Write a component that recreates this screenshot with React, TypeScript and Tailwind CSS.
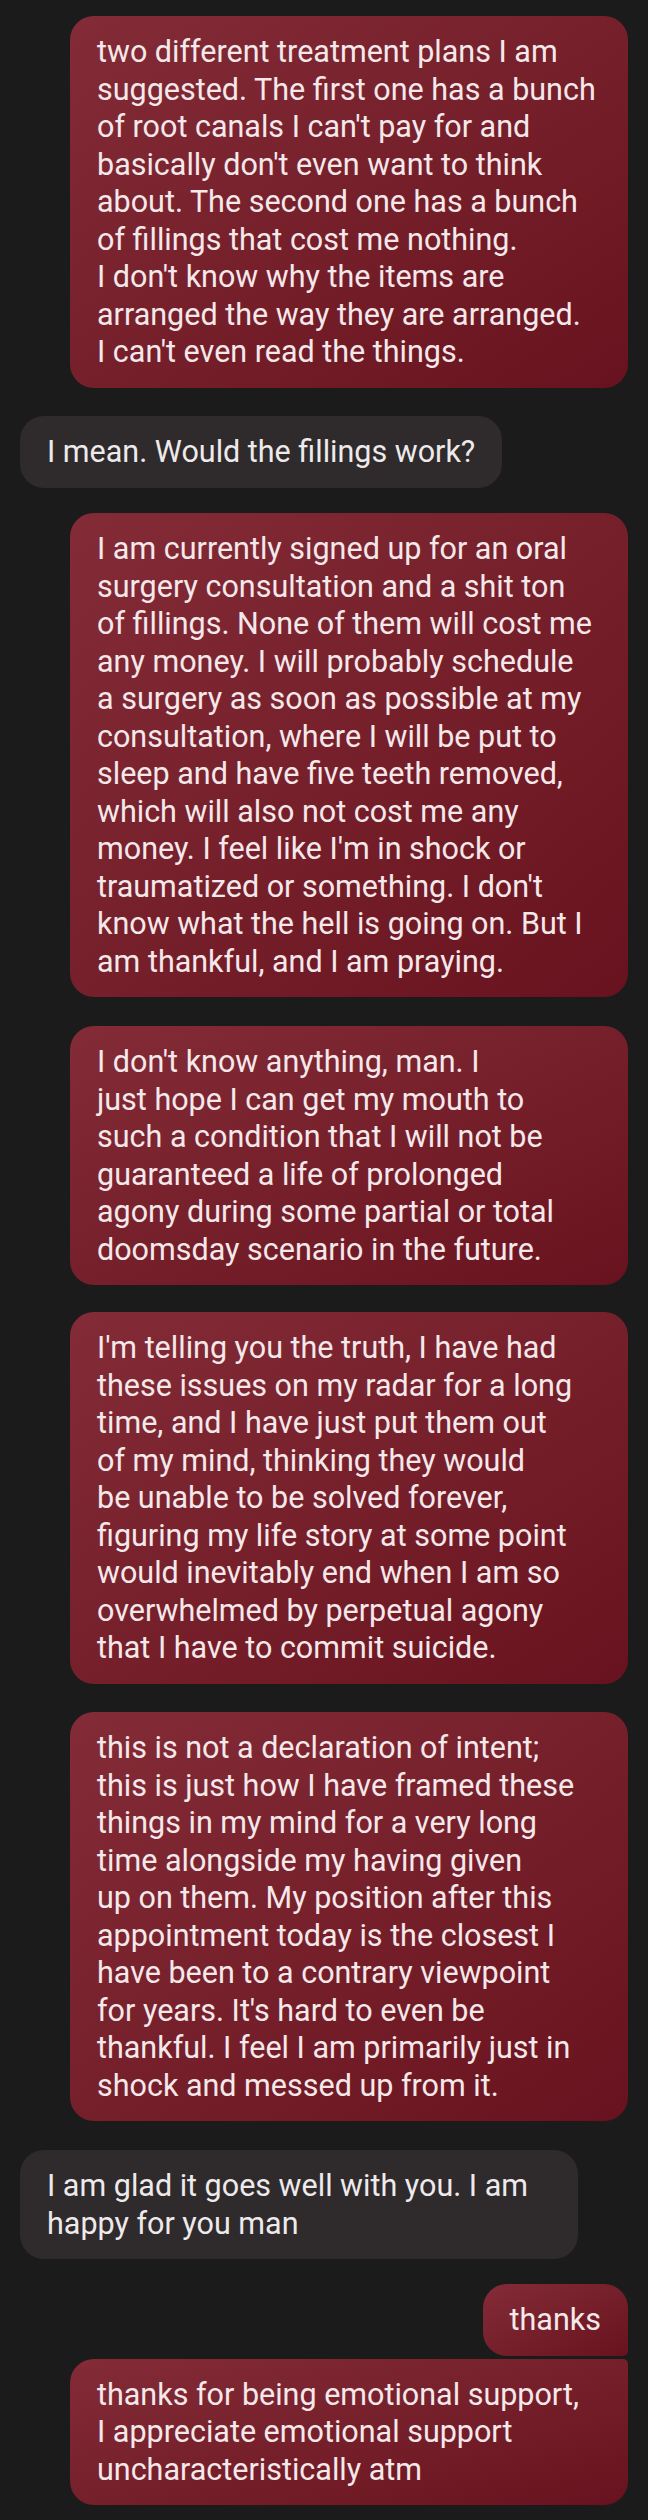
import React from "react";

type Msg = {
  out: boolean;
  lines: string[];
  mt: string;
  full?: boolean;
  shape?: string;
};

const msgs: Msg[] = [
  {
    out: true,
    full: true,
    mt: "mt-0",
    lines: [
      "two different treatment plans I am",
      "suggested. The first one has a bunch",
      "of root canals I can't pay for and",
      "basically don't even want to think",
      "about. The second one has a bunch",
      "of fillings that cost me nothing.",
      "I don't know why the items are",
      "arranged the way they are arranged.",
      "I can't even read the things.",
    ],
  },
  {
    out: false,
    mt: "mt-[28.5px]",
    lines: ["I mean. Would the fillings work?"],
  },
  {
    out: true,
    full: true,
    mt: "mt-[25.5px]",
    lines: [
      "I am currently signed up for an oral",
      "surgery consultation and a shit ton",
      "of fillings. None of them will cost me",
      "any money. I will probably schedule",
      "a surgery as soon as possible at my",
      "consultation, where I will be put to",
      "sleep and have five teeth removed,",
      "which will also not cost me any",
      "money. I feel like I'm in shock or",
      "traumatized or something. I don't",
      "know what the hell is going on. But I",
      "am thankful, and I am praying.",
    ],
  },
  {
    out: true,
    full: true,
    mt: "mt-[29px]",
    lines: [
      "I don't know anything, man. I",
      "just hope I can get my mouth to",
      "such a condition that I will not be",
      "guaranteed a life of prolonged",
      "agony during some partial or total",
      "doomsday scenario in the future.",
    ],
  },
  {
    out: true,
    full: true,
    mt: "mt-[27px]",
    lines: [
      "I'm telling you the truth, I have had",
      "these issues on my radar for a long",
      "time, and I have just put them out",
      "of my mind, thinking they would",
      "be unable to be solved forever,",
      "figuring my life story at some point",
      "would inevitably end when I am so",
      "overwhelmed by perpetual agony",
      "that I have to commit suicide.",
    ],
  },
  {
    out: true,
    full: true,
    mt: "mt-[28.5px]",
    lines: [
      "this is not a declaration of intent;",
      "this is just how I have framed these",
      "things in my mind for a very long",
      "time alongside my having given",
      "up on them. My position after this",
      "appointment today is the closest I",
      "have been to a contrary viewpoint",
      "for years. It's hard to even be",
      "thankful. I feel I am primarily just in",
      "shock and messed up from it.",
    ],
  },
  {
    out: false,
    full: true,
    mt: "mt-[29px]",
    lines: ["I am glad it goes well with you. I am", "happy for you man"],
  },
  {
    out: true,
    mt: "mt-[25px]",
    shape: "rounded-[24px] rounded-br-[5px]",
    lines: ["thanks"],
  },
  {
    out: true,
    full: true,
    mt: "mt-[3px]",
    shape: "rounded-[24px] rounded-tr-[5px]",
    lines: [
      "thanks for being emotional support,",
      "I appreciate emotional support",
      "uncharacteristically atm",
    ],
  },
];

function Bubble({ m }: { m: Msg }) {
  const shape = m.shape ?? "rounded-[24px]";
  const color = m.out
    ? "bg-gradient-to-br from-[#832c38] to-[#69121f] text-[#f4e8ea]"
    : "bg-[#2f2a2b] text-[#eeeaeb]";
  const width = m.full ? "w-[558px]" : "w-fit";
  return (
    <div className={`flex ${m.out ? "justify-end" : "justify-start"} ${m.mt}`}>
      <div className={`${width} ${shape} ${color} pl-[27px] pr-[27px] pt-[17px] pb-[17px]`}>
        {m.lines.map((l, i) => (
          <div key={i} className="whitespace-nowrap">
            {l}
          </div>
        ))}
      </div>
    </div>
  );
}

export default function App() {
  return (
    <div className="min-h-[2520px] w-full bg-[#1b1b1b] px-[20px] pt-[16px] font-['Roboto',sans-serif] text-[30.5px] leading-[37.5px]">
      <div className="flex flex-col">
        {msgs.map((m, i) => (
          <Bubble key={i} m={m} />
        ))}
      </div>
    </div>
  );
}
